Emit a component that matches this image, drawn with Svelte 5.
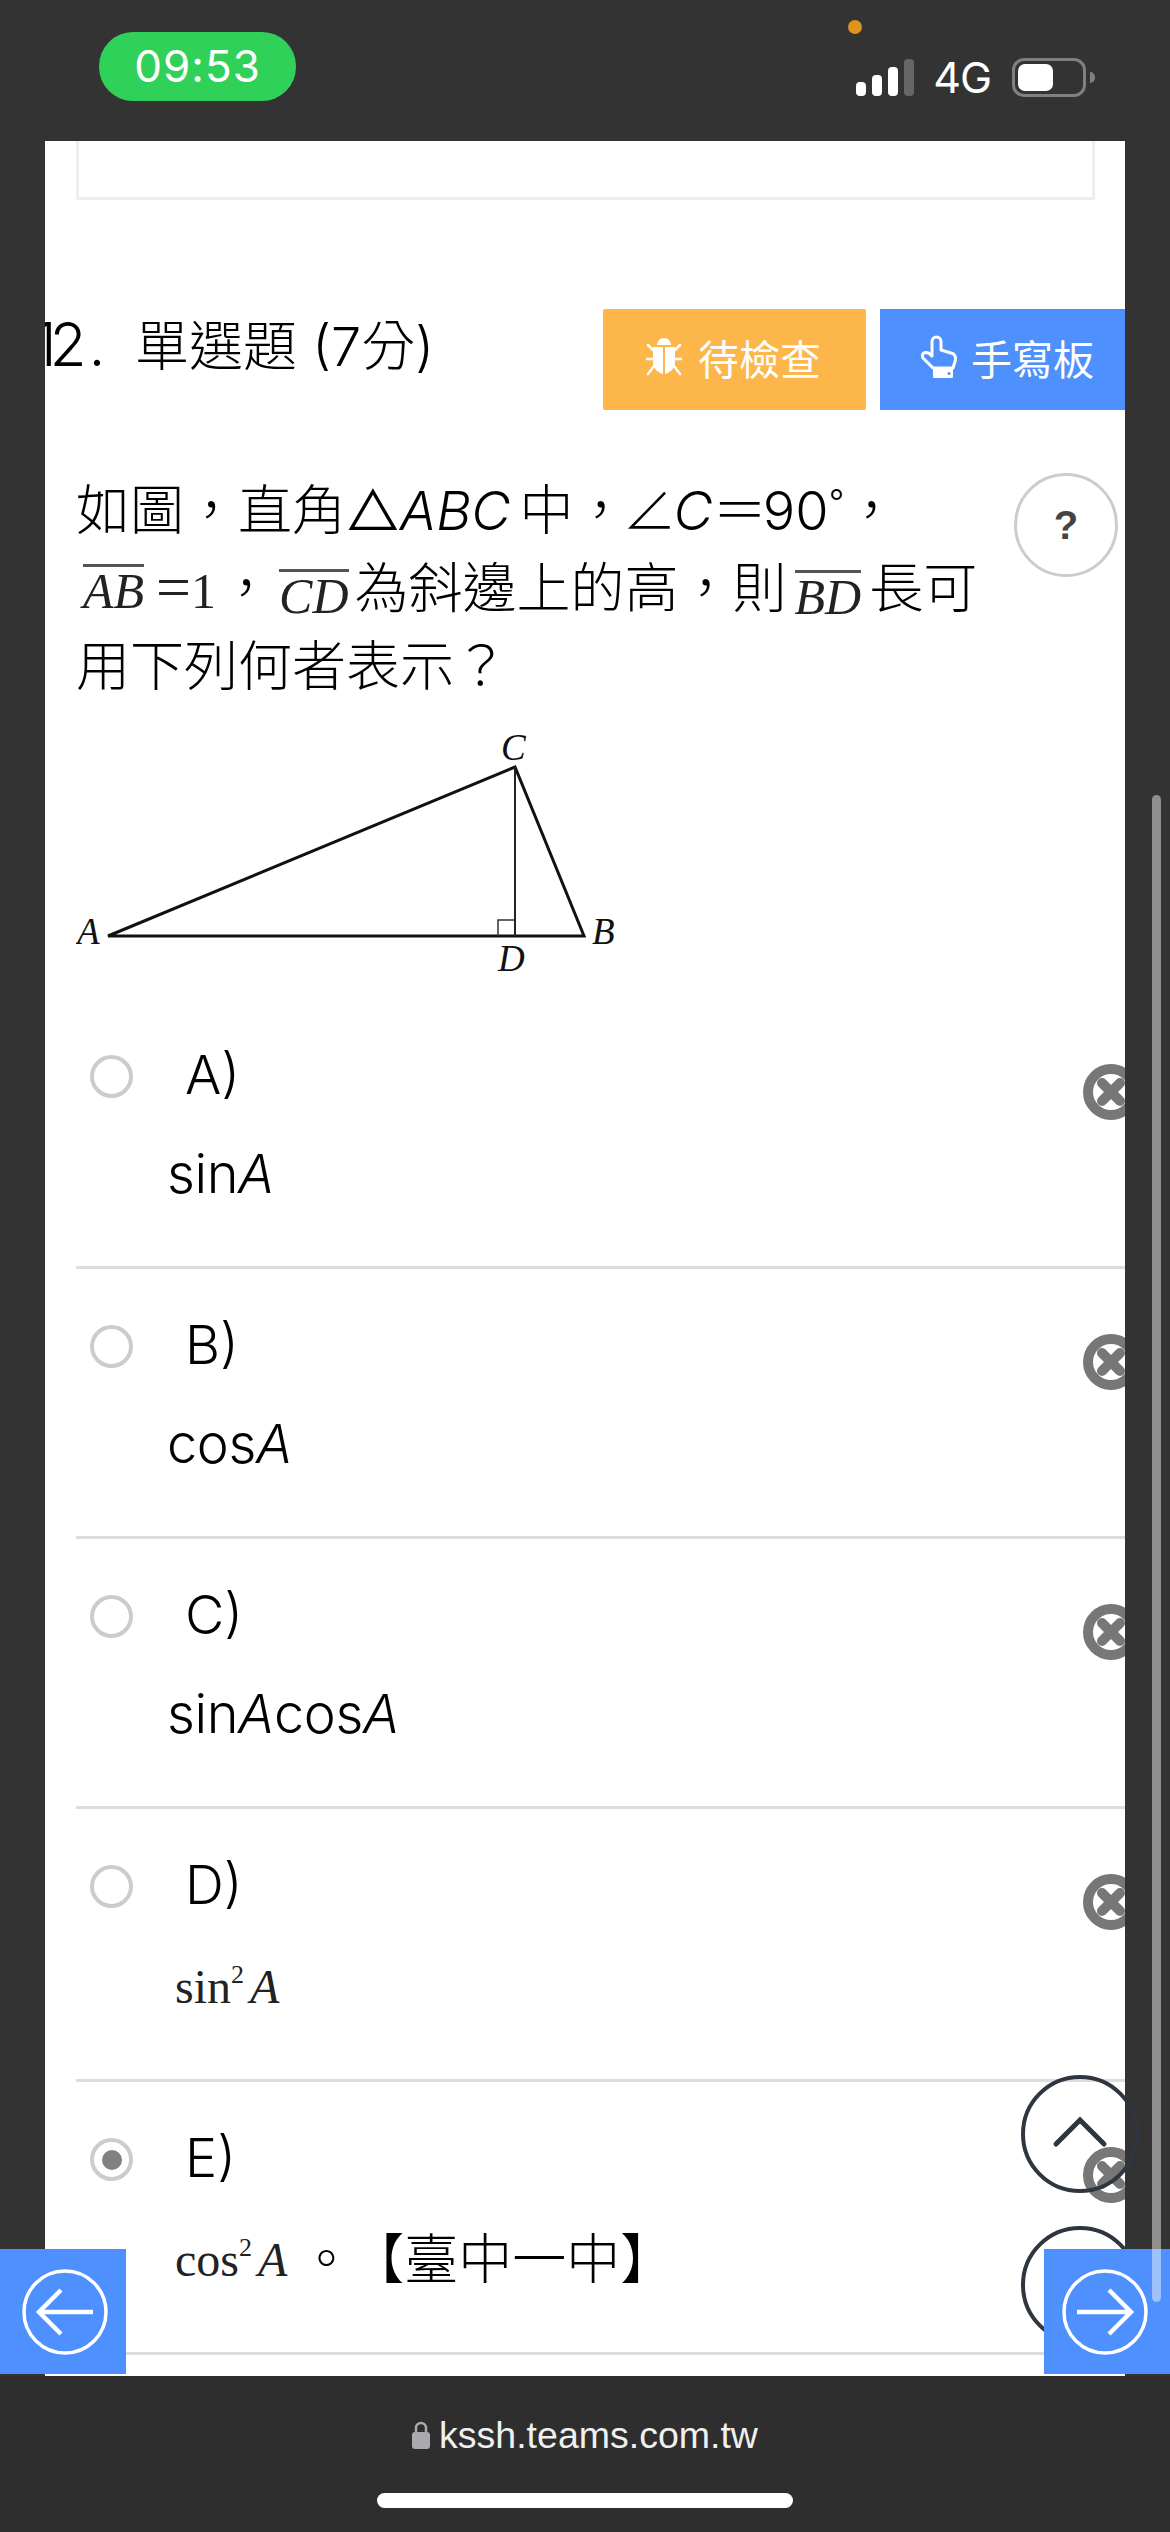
<script>
  const options = [
    { key: 'A', math: 'sin' },
    { key: 'B', math: 'cos' },
    { key: 'C', math: 'sinAcos' },
    { key: 'D', img: 'sin', tall: true },
    { key: 'E', img: 'cos', tall: true, selected: true, tail: true }
  ];
</script>

<div class="app">
  <header class="status">
    <div class="pill">09:53</div>
    <div class="indicators">
      <div class="bars">
        <span class="bar b1"></span><span class="bar b2"></span><span class="bar b3"></span><span class="bar b4"></span>
      </div>
      <span class="net">4G</span>
      <div class="battery"><span class="level"></span></div>
      <span class="nub"></span>
    </div>
    <span class="dot"></span>
  </header>

  <main class="page">
    <div class="prev-box"></div>

    <div class="title-row">
      <h2 class="title"><span class="num"><span class="one">1</span>2.</span>單選題 (7分)</h2>
      <div class="actions">
        <div class="btn orange">
          <svg width="36" height="38" viewBox="0 0 36 38">
            <path d="M11 7a7 7 0 0 1 14 0z" fill="#fff"/>
            <path d="M7 9h10v27c-5-1-10-6-10-12zM19 9h10v15c0 6-5 11-10 12z" fill="#fff"/>
            <path d="M7 12 2 7M29 12l5-5M7 21H0M29 21h7M8 28l-6 8M28 28l6 8" stroke="#fff" stroke-width="2.500" stroke-linecap="round" fill="none"/>
          </svg>
          <span>待檢查</span>
        </div>
        <div class="btn blue">
          <svg width="38" height="44" viewBox="-1 -2 38 44">
            <path d="M12 31 2 21Q0 17 4 15.500 8 15 11 19V4.500A4.500 4.500 0 0 1 20 4.500V13L30 16Q35 17 34.500 23L32 31Z" fill="none" stroke="#fff" stroke-width="3" stroke-linejoin="round"/>
            <rect x="12" y="31" width="20" height="10" rx="1.500" fill="#fff"/>
            <circle cx="28" cy="36.500" r="1.500" fill="#4d90fe"/>
          </svg>
          <span>手寫板</span>
        </div>
      </div>
    </div>

    <section class="question">
      <div class="stem">
        <div class="line">如圖，直角△<i class="abc">ABC</i>中，<span class="angle">∠</span><i>C</i><span class="equals">＝</span>90<sup class="deg">°</sup>，</div>
        <div class="line"><span class="im im-ab"><span class="ov">AB</span><span class="eq"><span class="eqs">=</span>1</span></span>，<span class="im im-cd"><span class="ov">CD</span></span>為斜邊上的高，則<span class="im im-bd"><span class="ov">BD</span></span>長可</div>
        <div class="line">用下列何者表示？</div>
      </div>
      <div class="help">?</div>
    </section>

    <svg class="figure" width="560" height="260" viewBox="0 0 560 260">
      <path d="M32 215H508L439 46Z" fill="none" stroke="#111" stroke-width="3" stroke-linejoin="miter"/>
      <path d="M439 46V215" fill="none" stroke="#222" stroke-width="2"/>
      <path d="M422 215V199H439" fill="none" stroke="#333" stroke-width="1.500"/>
      <g class="fig-label">
        <text x="425" y="39">C</text>
        <text x="1" y="223">A</text>
        <text x="516" y="223">B</text>
        <text x="422" y="250">D</text>
      </g>
    </svg>

    <section class="options">
      {#each options as o}
        <div class="option" class:tall={o.tall}>
          <div class="head">
            <span class="radio" class:on={o.selected}></span>
            <span class="label">{o.key})</span>
            <svg class="remove" width="56" height="56" viewBox="0 0 56 56">
              <circle cx="28" cy="28" r="23" fill="#fff" fill-opacity="0.6" stroke="#777" stroke-width="10"/>
              <path d="M19 19 37 37M37 19 19 37" stroke="#777" stroke-width="10" stroke-linecap="round"/>
            </svg>
          </div>
          {#if o.math === 'sin'}
            <div class="body">sin<i>A</i></div>
          {:else if o.math === 'cos'}
            <div class="body">cos<i>A</i></div>
          {:else if o.math}
            <div class="body">sin<i>A</i>cos<i>A</i></div>
          {:else}
            <div class="body img">
              <span class="serif">{o.img}<sup>2</sup><i>A</i></span>
              {#if o.tail}<span class="tail">。<span class="src">【臺中一中】</span></span>{/if}
            </div>
          {/if}
        </div>
      {/each}
    </section>
  </main>

  <footer class="urlbar">
    <div class="url">
      <svg width="18" height="28" viewBox="0 0 18 28">
        <path d="M4 12V7a5 5 0 0 1 10 0v5" fill="none" stroke="#a9a9ae" stroke-width="2.500"/>
        <rect x="0" y="11" width="18" height="17" rx="3" fill="#a9a9ae"/>
      </svg>
      <span>kssh.teams.com.tw</span>
    </div>
    <div class="home"></div>
  </footer>

  <div class="float up">
    <svg width="60" height="36" viewBox="0 0 60 36">
      <path d="M6 30 30 6 54 30" fill="none" stroke="#2f3640" stroke-width="5" stroke-linecap="round" stroke-linejoin="miter"/>
    </svg>
  </div>
  <div class="float down"></div>

  <div class="nav left">
    <svg width="88" height="88" viewBox="0 0 88 88">
      <circle cx="44" cy="44" r="41" fill="none" stroke="#fff" stroke-width="3.500"/>
      <path d="M72 44H18M40 22 18 44l22 22" fill="none" stroke="#fff" stroke-width="4.500"/>
    </svg>
  </div>
  <div class="nav right">
    <svg width="88" height="88" viewBox="0 0 88 88">
      <circle cx="44" cy="44" r="41" fill="none" stroke="#fff" stroke-width="3.500"/>
      <path d="M16 44H70M48 22l22 22-22 22" fill="none" stroke="#fff" stroke-width="4.500"/>
    </svg>
  </div>

  <div class="scrollbar"></div>
</div>

<style>
  :global(body) { margin: 0; }
  .app {
    position: relative;
    width: 1170px;
    height: 2532px;
    overflow: hidden;
    background: #333;
    font-family: Inter, "Noto Sans CJK TC", sans-serif;
    font-weight: 300;
    color: #000;
  }
  .status {
    height: 141px;
    box-sizing: border-box;
    display: flex;
    align-items: flex-start;
    padding: 32px 75px 0 99px;
  }
  .pill {
    width: 197px;
    height: 69px;
    border-radius: 34px;
    background: #30d158;
    color: #fff;
    font: 400 44px/69px Inter, sans-serif;
    letter-spacing: 1px;
    text-align: center;
  }
  .indicators {
    margin-left: auto;
    display: flex;
    align-items: center;
    height: 39px;
    margin-top: 26px;
    color: #fff;
  }
  .bars { display: flex; align-items: flex-end; gap: 6px; height: 37px; }
  .bar { width: 10px; border-radius: 4px; background: #fff; }
  .b1 { height: 14px; }
  .b2 { height: 21px; }
  .b3 { height: 29px; }
  .b4 { height: 37px; background: #666; }
  .net { font: 400 43px/39px Inter, sans-serif; margin-left: 19px; letter-spacing: -1px; }
  .battery {
    width: 74px;
    height: 39px;
    box-sizing: border-box;
    margin-left: 21px;
    border: 3px solid #808080;
    border-radius: 12px;
    padding: 3px;
  }
  .level { display: block; width: 35px; height: 27px; border-radius: 7px; background: #fff; }
  .nub { width: 5px; height: 11px; margin-left: 4px; border-radius: 0 6px 6px 0; background: #808080; }
  .dot {
    position: absolute;
    left: 848px;
    top: 20px;
    width: 14px;
    height: 14px;
    border-radius: 50%;
    background: #e0931a;
  }

  .page {
    height: 2235px;
    margin: 0 45px;
    background: #fff;
    overflow: hidden;
  }
  .prev-box {
    height: 56px;
    margin: 0 30px 0 31px;
    border: 3px solid #eee;
    border-top: 0;
  }
  .title-row {
    margin-top: 109px;
    height: 101px;
    display: flex;
    justify-content: space-between;
  }
  .title {
    margin: 3px 0 0 -12px;
    font-size: 54px;
    line-height: 64px;
    font-weight: 300;
    white-space: nowrap;
  }
  .num { display: inline-block; width: 102px; font-size: 60px; letter-spacing: 2px; }
  .one { letter-spacing: -7px; }
  .actions { display: flex; gap: 14px; }
  .btn {
    height: 101px;
    display: flex;
    align-items: center;
    color: #fff;
    font-size: 41px;
    font-weight: 400;
    gap: 16px;
    box-sizing: border-box;
    padding-bottom: 6px;
  }
  .orange { width: 263px; background: #fdb64a; border-radius: 2px; padding-left: 43px; }
  .blue { width: 245px; background: #4d90fe; padding-left: 40px; gap: 13px; }

  .question {
    display: flex;
    justify-content: space-between;
    margin-top: 62px;
    padding: 0 7px 0 31px;
  }
  .line {
    font-size: 54px;
    line-height: 78px;
    height: 78px;
    white-space: nowrap;
  }
  .abc { margin-right: 9px; }
  .angle { letter-spacing: -8px; margin-left: -5px; margin-right: 5px; }
  .equals { letter-spacing: -4px; }
  .deg { font-size: 34px; line-height: 0; vertical-align: 16px; }
  .help {
    width: 104px;
    height: 104px;
    box-sizing: border-box;
    margin-top: 1px;
    border: 3px solid #ccc;
    border-radius: 50%;
    text-align: center;
    font: 700 40px/98px "Liberation Sans", sans-serif;
    color: #444;
  }
  .im {
    display: inline-block;
    font-family: "Liberation Serif", serif;
    font-style: italic;
    font-size: 50px;
    font-weight: 400;
    line-height: 40px;
    color: #222;
  }
  .ov { display: inline-block; border-top: 3px solid #555; padding-top: 4px; line-height: 40px; }
  .eq { font-style: normal; margin-left: 12px; }
  .eqs { font-size: 62px; line-height: 0; }
  .im-ab { margin: 0 3px 0 7px; }
  .im-cd { margin: 0 6px 0 6px; vertical-align: -5px; }
  .im-bd { margin: 0 8px 0 8px; vertical-align: -6px; }

  .figure { display: block; margin: 15px 0 18px 31px; }
  .fig-label text {
    font: italic 400 37px "Liberation Serif", serif;
    fill: #111;
  }

  .options { margin-left: 31px; }
  .option {
    height: 270px;
    box-sizing: border-box;
    padding-top: 56px;
    border-bottom: 3px solid #ddd;
  }
  .option.tall { height: 273px; }
  .head { display: flex; height: 43px; align-items: flex-start; }
  .radio {
    width: 43px;
    height: 43px;
    box-sizing: border-box;
    flex: none;
    margin-left: 14px;
    border: 4px solid #ccc;
    border-radius: 50%;
    background: #fff;
    display: flex;
    align-items: center;
    justify-content: center;
  }
  .radio.on::after {
    content: "";
    width: 20px;
    height: 20px;
    border-radius: 50%;
    background: #808080;
  }
  .label { margin-left: 52px; font-size: 54px; line-height: 39px; }
  .remove { flex: none; margin: 9px -14px 0 auto; }
  .body {
    margin: 46px 0 0 91px;
    font-size: 54px;
    line-height: 60px;
    letter-spacing: -0.4px;
    white-space: nowrap;
  }
  .body.img { margin: 49px 0 0 99px; display: flex; align-items: center; letter-spacing: 0; }
  .serif {
    font: 400 48px/60px "Liberation Serif", serif;
    color: #222;
  }
  .serif sup { font-size: 26px; line-height: 0; vertical-align: 20px; margin-right: 6px; }
  .tail { font-size: 54px; margin-left: 12px; }
  .src { margin-left: 24px; }

  .urlbar {
    height: 156px;
    box-sizing: border-box;
    padding-top: 37px;
    background: #2e2e2e;
    display: flex;
    flex-direction: column;
    align-items: center;
  }
  .url {
    display: flex;
    align-items: center;
    gap: 9px;
    height: 44px;
    color: #f0f0f0;
    font: 400 37.5px/44px "Liberation Sans", sans-serif;
  }
  .home {
    width: 416px;
    height: 15px;
    margin-top: 36px;
    border-radius: 8px;
    background: #fff;
  }

  .float {
    position: absolute;
    left: 1021px;
    width: 118px;
    height: 118px;
    box-sizing: border-box;
    border: 4px solid #2f3640;
    border-radius: 50%;
  }
  .up { top: 2075px; display: flex; justify-content: center; padding-top: 35px; }
  .down { top: 2226px; }
  .nav {
    position: absolute;
    top: 2249px;
    height: 125px;
    background: #4d90fe;
    display: flex;
    align-items: center;
  }
  .left { left: 0; width: 126px; padding-left: 21px; box-sizing: border-box; }
  .right { left: 1044px; width: 126px; padding-left: 17px; box-sizing: border-box; }
  .scrollbar {
    position: absolute;
    left: 1152px;
    top: 795px;
    width: 9px;
    height: 1507px;
    border-radius: 5px;
    background: rgba(255, 255, 255, 0.45);
  }
</style>
